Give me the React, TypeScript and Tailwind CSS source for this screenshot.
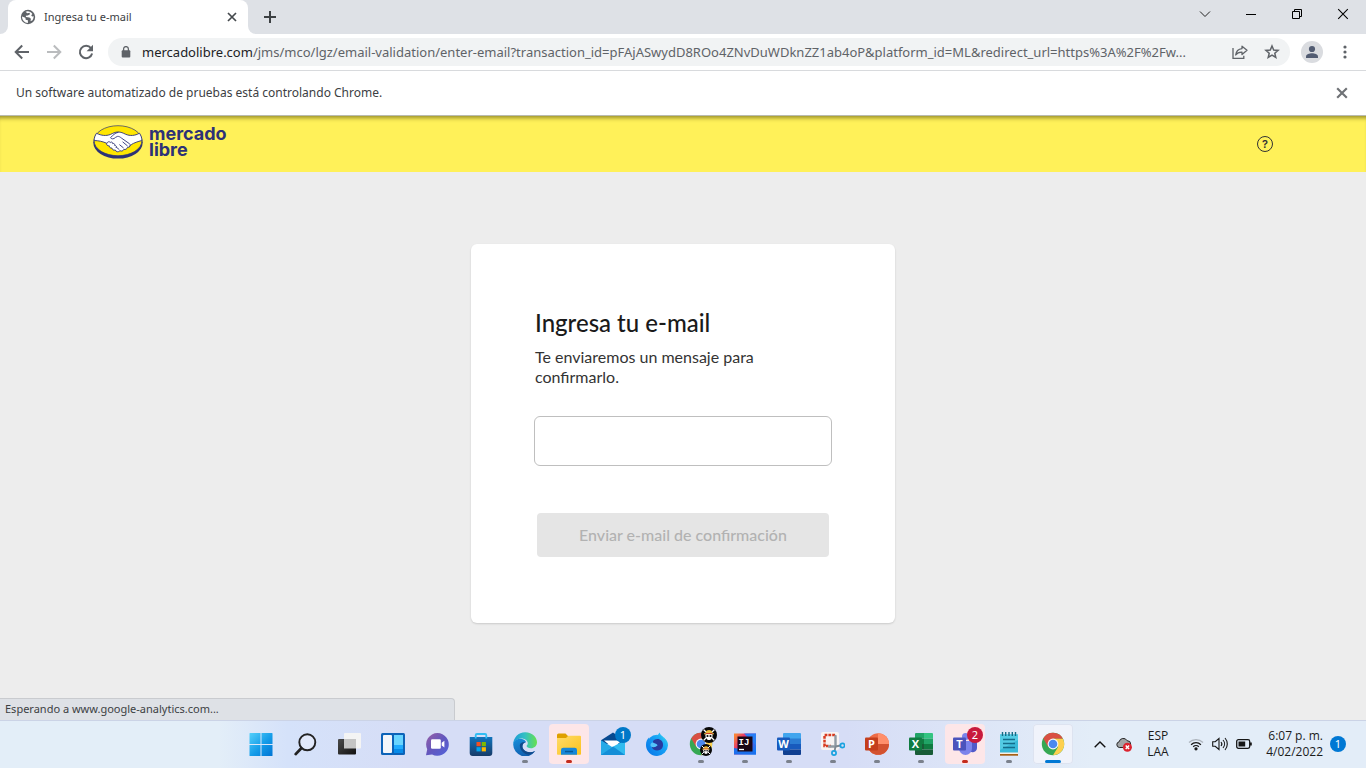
import type { ReactNode } from "react";

const ui = "font-['Noto_Sans','Open_Sans',sans-serif]";

/* ---------- Browser icons ---------- */

function Globe() {
  return (
    <svg className="size-4 shrink-0" viewBox="0 0 16 16" aria-hidden="true">
      <circle cx="8" cy="8" r="7.2" fill="#5f6368" />
      <path d="M2 7.5 5.4 8.8l.3 2 2.2.5v2.6C4.6 13.8 2 11.200 2 7.500ZM5.500 2.700l1.800 1.500 2.300-.4.400 1.500-2.200 1.200-2 .2.200 1.300 3.400.4 1.500 1.400-.4 2.400 2-.9.900-2 .3-2-1.600.2-.900-1.300 1.200-1.300C10.700 2.700 8 1.400 5.500 2.700Z" fill="#fff" />
    </svg>
  );
}

function Cross({ size, width, color }: { size: number; width: number; color: string }) {
  return (
    <svg width={size} height={size} viewBox="0 0 10 10" stroke={color} strokeWidth={width} aria-hidden="true">
      <path d="m1 1 8 8M9 1 1 9" />
    </svg>
  );
}

function ArrowLeft() {
  return (
    <svg className="size-4" viewBox="0 0 16 16" fill="none" stroke="#5f6368" strokeWidth="2" aria-hidden="true">
      <path d="M15 8H2.500M8.200 1.500 1.700 8l6.500 6.500" />
    </svg>
  );
}

function ArrowRight() {
  return (
    <svg className="size-4" viewBox="0 0 16 16" fill="none" stroke="#babcbe" strokeWidth="2" aria-hidden="true">
      <path d="M1 8h12.500M7.800 1.500 14.300 8l-6.500 6.500" />
    </svg>
  );
}

function Reload() {
  return (
    <svg className="size-4" viewBox="0 0 16 16" aria-hidden="true">
      <path d="M13 4.200A6.200 6.200 0 1 0 14.100 9.500" fill="none" stroke="#5f6368" strokeWidth="2" />
      <path d="M15 .8v6.400H8.600Z" fill="#5f6368" />
    </svg>
  );
}

function Lock() {
  return (
    <svg className="h-3 w-[10px] shrink-0" viewBox="0 0 10 12" aria-hidden="true">
      <path d="M2.600 5V3a2.400 2.400 0 0 1 4.800 0v2" fill="none" stroke="#5f6368" strokeWidth="1.300" />
      <rect x=".7" y="4.300" width="8.600" height="7.200" rx="1" fill="#5f6368" />
    </svg>
  );
}

function Share() {
  return (
    <svg className="size-4" viewBox="0 0 16 16" fill="none" stroke="#5f6368" strokeWidth="1.300" aria-hidden="true">
      <path d="M1 4v10.300h10.800v-2.500" />
      <path d="M10 2.200 15 6.300l-5 4.200V8.100C7 8 5.100 8.900 3.700 11c.4-3.500 2.600-6 6.300-6.400Z" strokeLinejoin="round" />
    </svg>
  );
}

function Star() {
  return (
    <svg className="size-4" viewBox="0 0 16 16" fill="none" stroke="#5f6368" strokeWidth="1.500" aria-hidden="true">
      <path d="m8 2 1.700 4 4.400.4-3.300 2.900 1 4.200L8 11.200l-3.800 2.300 1-4.200-3.300-2.900 4.400-.4Z" />
    </svg>
  );
}

function Avatar() {
  return (
    <svg className="size-[22px]" viewBox="0 0 22 22" aria-hidden="true">
      <circle cx="11" cy="11" r="11" fill="#dadce0" />
      <circle cx="11" cy="8" r="3.100" fill="#525c72" />
      <path d="M5 17v-1.500c0-2 3.500-3.200 6-3.200s6 1.200 6 3.200V17Z" fill="#525c72" />
    </svg>
  );
}

function Dots() {
  return (
    <svg className="h-4 w-1" viewBox="0 0 4 16" fill="#5f6368" aria-hidden="true">
      <circle cx="2" cy="3" r="1.600" />
      <circle cx="2" cy="8" r="1.600" />
      <circle cx="2" cy="13" r="1.600" />
    </svg>
  );
}

/* ---------- Site logo ---------- */

function Handshake() {
  return (
    <svg className="h-[34px] w-[50px]" viewBox="0 0 50 34" aria-hidden="true">
      <ellipse cx="25" cy="17.600" rx="24.700" ry="16" fill="#2d3277" />
      <ellipse cx="25" cy="15.700" rx="23.900" ry="15" fill="#ffe600" stroke="#2d3277" strokeWidth=".7" />
      <path
        d="M3.500 8.300c5 2.400 9.500 2.800 13.800 1.200C20 8.300 22 7 25 7c3 0 5 1 7.500 2.200 4.500 2 9.500 1.600 14-1 1.500 2.300 2.500 5 2.400 7.300-4 1-7.900 2.400-10.500 4-1.100 1-1.500 3.200-3.900 2.800-.7 2-2.200 2.500-3.600 2-.8 1.700-2.400 2.200-3.900 1.400-1.500 1.700-4.100 1.300-4.700-.7-1.800.6-3.300-.4-3.300-1.900-1.700.2-2.900-.8-2.600-2.200-2 .2-3.300-1.300-2.600-2.600C9.800 16.500 5.500 15.600 1.100 15.500c.1-2.700.9-5 2.400-7.200Z"
        fill="#fff" stroke="#2d3277" strokeWidth=".9"
      />
      <path
        d="M25.500 7.300c-3.800.4-5.700 3.500-8 5.300.7 1.700 3.300 1.700 5-.2l2-1c1.500-.2 2.600.6 4 1.700l8.200 5.800c1 .7.800 2-.8 2.700m-6.300-4.800 5 4.200m-8.200-1.400 4.200 3.400m-7.500-1 3.200 2.600M13.800 18.300c.7-1.500 2.500-2.300 3.400-.8 1.200-1.100 2.700-.2 2.500 1.100 1.400-.5 2.400.6 1.900 1.800 1.500-.1 2.200 1 1.400 2.300"
        fill="none" stroke="#2d3277" strokeWidth=".9"
      />
    </svg>
  );
}

/* ---------- Taskbar icons ---------- */

function Windows() {
  return (
    <svg className="size-6" viewBox="0 0 24 24" aria-hidden="true">
      <defs>
        <linearGradient id="win" x1="0" y1="0" x2="1" y2="1">
          <stop offset="0" stopColor="#54d0fa" />
          <stop offset=".55" stopColor="#139be8" />
          <stop offset="1" stopColor="#0074d4" />
        </linearGradient>
      </defs>
      <path d="M.5 1.500A.7.700 0 0 1 1 1h10.500v11H.5ZM12.500 1h10.500a.5.500 0 0 1 .5.500V12h-11ZM.5 13h11v11H1a.5.500 0 0 1-.5-.5ZM12.500 13h11v10.500a.5.500 0 0 1-.5.500H12.500Z" fill="url(#win)" />
    </svg>
  );
}

function Search() {
  return (
    <svg className="size-6" viewBox="0 0 24 24" fill="none" stroke="#222" aria-hidden="true">
      <circle cx="14.300" cy="10.300" r="8" strokeWidth="1.900" fill="#e2e9fa" />
      <path d="m8.300 16.200-5.600 5.900" strokeWidth="2.800" strokeLinecap="round" />
    </svg>
  );
}

function TaskView() {
  return (
    <svg className="size-6" viewBox="0 0 24 24" aria-hidden="true">
      <defs>
        <linearGradient id="tv" x1="0" y1="0" x2="1" y2="1">
          <stop offset="0" stopColor="#4a4a4a" /><stop offset="1" stopColor="#111" />
        </linearGradient>
      </defs>
      <rect x="7" y="1" width="17" height="15.500" rx="1" fill="#f4f4f4" />
      <rect x="1" y="7" width="18" height="15.500" rx="1" fill="url(#tv)" />
      <rect x="7" y="7" width="12" height="9.500" fill="#c4c4c4" />
    </svg>
  );
}

function Widgets() {
  return (
    <svg className="size-6" viewBox="0 0 24 24" aria-hidden="true">
      <rect y="1" width="24" height="22" rx="1.500" fill="#0c63b8" />
      <rect x="2" y="3" width="9" height="18" rx="1" fill="#f3f6fa" />
      <path d="M13 3h9v10h-9Z" fill="#69d5ff" />
      <path d="M13 13h9v4h-9Z" fill="#20acff" />
      <path d="M13 17h9v4h-9Z" fill="#078be9" />
    </svg>
  );
}

function Chat() {
  return (
    <svg className="size-6" viewBox="0 0 24 24" aria-hidden="true">
      <defs>
        <linearGradient id="chat" x1="0" y1="0" x2="1" y2="1">
          <stop offset="0" stopColor="#9a5fa5" /><stop offset=".5" stopColor="#6257be" /><stop offset="1" stopColor="#5164dc" />
        </linearGradient>
      </defs>
      <path d="M12.500 1a11.400 11.400 0 1 1-5.400 21.500L1 23.200l1.200-6A11.400 11.400 0 0 1 12.500 1Z" fill="url(#chat)" />
      <rect x="6" y="7.200" width="9.800" height="9.500" rx="1.200" fill="#fff" />
      <path d="m16.700 10.700 2.700-2v6.700l-2.700-2Z" fill="#fff" />
    </svg>
  );
}

function Store() {
  return (
    <svg className="size-6" viewBox="0 0 24 24" aria-hidden="true">
      <defs>
        <linearGradient id="store" x1="0" y1="0" x2="0" y2="1">
          <stop offset="0" stopColor="#1174bd" /><stop offset="1" stopColor="#173b68" />
        </linearGradient>
      </defs>
      <path d="M.7 5h22.600v16a3 3 0 0 1-3 3H3.700a3 3 0 0 1-3-3Z" fill="url(#store)" />
      <path d="M6.700 6.500V3.300c0-.8.500-1.300 1.300-1.300h8c.8 0 1.300.5 1.300 1.300v3.200" fill="none" stroke="#31bdf3" strokeWidth="1.800" />
      <path d="M7.500 10h4.200v4.200H7.500Z" fill="#f25022" /><path d="M12.700 10h4.200v4.200h-4.200Z" fill="#7fba00" />
      <path d="M7.500 15.200h4.200v4.200H7.500Z" fill="#00a4ef" /><path d="M12.700 15.200h4.200v4.200h-4.200Z" fill="#ffb900" />
    </svg>
  );
}

function Edge() {
  return (
    <svg className="size-6" viewBox="0 0 24 24" aria-hidden="true">
      <defs>
        <linearGradient id="edgeTop" x1="0" y1=".3" x2="1" y2=".3">
          <stop offset="0" stopColor="#1d9bd8" /><stop offset=".5" stopColor="#34c1c2" /><stop offset="1" stopColor="#66e14c" />
        </linearGradient>
        <linearGradient id="edgeLow" x1="0" y1="0" x2=".4" y2="1">
          <stop offset="0" stopColor="#168fdb" /><stop offset="1" stopColor="#1160b0" />
        </linearGradient>
      </defs>
      <path d="M.2 12.500C.2 5.600 5.300.2 12.200.2 19.600.2 24 5.700 24 10.200c0 3.800-2.900 6-6 6-2.800 0-4.400-1-4.400-2.100 0-.8 1.200-1 1.200-3 0-2.500-2.900-4.700-6.300-4.700C4.600 6.400 1.300 8.500.2 12.500Z" fill="url(#edgeTop)" />
      <path d="M.2 12.500c.5-3.800 4-6 7.600-5.700 2.800.2 5 1.900 5.200 3.400-2.200.2-3.600 2.100-3.600 4 0 3.500 4 6.500 8.200 6.100 1.600-.1 3.400-.7 4.600-1.300A12 12 0 0 1 .2 12.500Z" fill="url(#edgeLow)" />
      <path d="M6.800 13.200c0 4.500 3.800 9.100 9.300 9.500 2.500-.5 4.700-2 6.100-3.700-6 3-12.200.2-12.800-4.200-.1-1.900.8-3.700 3-4.800-3.500-.2-5.600 1.200-5.600 3.200Z" fill="#114a8b" />
    </svg>
  );
}

function Folder() {
  return (
    <svg className="size-6" viewBox="0 0 24 24" aria-hidden="true">
      <defs>
        <linearGradient id="folder" x1="0" y1="0" x2="1" y2="1">
          <stop offset="0" stopColor="#ffdb6a" /><stop offset="1" stopColor="#fbc21c" />
        </linearGradient>
      </defs>
      <path d="M0 3a1.500 1.500 0 0 1 1.500-1.500h7L11 4v3H0Z" fill="#dfa000" />
      <path d="M0 6h9l2.300-2.300H23a1 1 0 0 1 1 1V22a.8.800 0 0 1-.8.800H.8A.8.800 0 0 1 0 22Z" fill="url(#folder)" />
      <path d="M4 22.800V18a2.300 2.300 0 0 1 2.300-2.300h11.400A2.300 2.300 0 0 1 20 18v4.800Z" fill="#1787d8" />
      <path d="M8 18.800h8v1.500H8Z" fill="#075997" />
    </svg>
  );
}

function Mail() {
  return (
    <svg className="size-6" viewBox="0 0 24 24" aria-hidden="true">
      <path d="M0 8.300 12 .5l12 7.800V12H0Z" fill="#084a91" />
      <path d="M3 8.500h18L12 16Z" fill="#fff" />
      <path d="M0 8.300 24 23H0Z" fill="#25a9e7" /><path d="M24 8.300V23L7.500 17Z" fill="#31bbef" /><path d="m0 23 12-8.500L24 23Z" fill="#148ed7" />
    </svg>
  );
}

function Firefox() {
  return (
    <svg className="size-6" viewBox="0 0 24 24" aria-hidden="true">
      <defs>
        <linearGradient id="fox" x1="0" y1=".8" x2="1" y2="0">
          <stop offset="0" stopColor="#0878e8" /><stop offset=".6" stopColor="#17a4f6" /><stop offset="1" stopColor="#43e4ed" />
        </linearGradient>
      </defs>
      <circle cx="12" cy="13" r="10.300" fill="url(#fox)" />
      <path d="M1 13C1 9.300 2.300 7.300 3.700 5.400l.4 2.100 2.600-1.800c.4 1 1.100 1.700 2.200 2L12 8c-.5-3 1-5.500 2.700-7.500.4 2.400 2 3 3.300 4.600 0 1 .4 1.700 1 2.200l.4-1.200c2.300 2.200 3.600 4.200 3.600 7.200A11.100 11.100 0 0 1 12 24 11 11 0 0 1 1 13Z" fill="url(#fox)" />
      <path d="M8 9c1.700-2.400 6-3 8.300-.5 2.600 2.700 2.300 7.300-1 9.300-3.500 1.900-8 .3-8.500-3.300 2.200 1 4 .2 5.300-1.100-1.900-.5-4.200-1-4.100-4.400Z" fill="#273aa0" />
      <path d="M5.700 14.300c1.500 1 3.400 1.200 5.300.2l1.700-1.200c-1.700-2-3.300-1.800-4.900-2.700C6 10.800 5 12.200 5.700 14.300Z" fill="#54c3fb" />
    </svg>
  );
}

function ChromeBall({ className }: { className: string }) {
  return (
    <svg className={className} viewBox="0 0 24 24" aria-hidden="true">
      <circle cx="12" cy="12" r="11.200" fill="#35a853" />
      <path d="M12 12 2.300 6.400A11.200 11.200 0 0 1 21.900 6.700H12Z" fill="#d94f43" />
      <path d="M12 6.700h9.900A11.200 11.200 0 0 1 12 23.200l5-8.200Z" fill="#fdd04f" />
      <path d="M2.300 6.400 7.200 15 12 6.700Z" fill="#d94f43" />
      <circle cx="12" cy="12" r="5.400" fill="#f5f7fb" /><circle cx="12" cy="12" r="4.300" fill="#4b89ef" />
    </svg>
  );
}

function Pirate({ className }: { className: string }) {
  return (
    <svg className={className} viewBox="0 0 16 16" aria-hidden="true">
      <circle cx="8" cy="8" r="8" fill="#080808" />
      <path d="m3 3 10 10m0-10-10 10" stroke="#fff" strokeWidth="1.300" strokeLinecap="round" />
      <circle cx="8" cy="8.400" r="3.600" fill="#fff" />
      <path d="M6.300 11h3.400v2H6.300Z" fill="#fff" />
      <path d="M3 7.200h10v-1H11.300a3.300 3.300 0 0 0-6.600 0H3Z" fill="#edbd3b" />
      <path d="M4.700 6h6.600v1H4.700Z" fill="#c63d2d" />
      <circle cx="6.500" cy="9" r="1.100" fill="#080808" /><circle cx="9.500" cy="9" r="1.100" fill="#080808" />
    </svg>
  );
}

function ChromeTesting() {
  return (
    <span className="relative block size-6">
      <ChromeBall className="size-6" />
      <Pirate className="absolute -top-[5px] left-3 size-4" />
      <Pirate className="absolute top-3 left-[11px] size-3" />
    </span>
  );
}

function IntelliJ() {
  return (
    <svg className="size-6" viewBox="0 0 24 24" aria-hidden="true">
      <defs>
        <linearGradient id="ij" x1="0" y1=".2" x2="1" y2=".8">
          <stop offset="0" stopColor="#f98538" /><stop offset=".3" stopColor="#e8366e" /><stop offset=".6" stopColor="#7257dc" /><stop offset="1" stopColor="#087cfa" />
        </linearGradient>
      </defs>
      <path d="M1 1.500h22v21H1Z" fill="url(#ij)" />
      <path d="M11 1.500h12v12Z" fill="#287ef5" /><path d="M1 16v6.500h22V20Z" fill="#1c70ec" />
      <path d="M4.500 4.500h15v15h-15Z" fill="#1a0716" />
      <path d="M6 17.500h5" stroke="#fff" strokeWidth="1.300" />
      <text x="5.500" y="12.500" fontFamily="Liberation Mono, monospace" fontSize="9" fontWeight="700" fill="#fff">IJ</text>
    </svg>
  );
}

function OfficeLetter({ children, fill }: { children: string; fill: string }) {
  return (
    <>
      <rect y="5.500" width="13" height="13" rx="1" fill={fill} />
      <text x="6.500" y="16" textAnchor="middle" fontFamily="Open Sans, sans-serif" fontSize="11" fontWeight="700" fill="#fff">{children}</text>
    </>
  );
}

function Word() {
  return (
    <svg className="size-6" viewBox="0 0 24 24" aria-hidden="true">
      <path d="M6 2a1 1 0 0 1 1-1h16a1 1 0 0 1 1 1v5H6Z" fill="#41a5ee" /><path d="M6 6.500h18V12H6Z" fill="#2b7cd3" />
      <path d="M6 12h18v5.500H6Z" fill="#185abd" /><path d="M6 17.500h18V22a1 1 0 0 1-1 1H7a1 1 0 0 1-1-1Z" fill="#103f91" />
      <OfficeLetter fill="#185abd">W</OfficeLetter>
    </svg>
  );
}

function Snip() {
  return (
    <svg className="size-6" viewBox="0 0 24 24" aria-hidden="true">
      <rect x="0" y="0" width="18" height="18" rx="2" fill="#f8f4f3" />
      <path d="M14 3H3.500v11H10" fill="none" stroke="#d83b20" strokeWidth="2.500" strokeDasharray="2.800 1" />
      <path d="M14.500 4v10.500M14.500 14.500H8" stroke="#909aa3" strokeWidth="2.400" strokeLinecap="round" />
      <path d="m14.500 14.500-1 5M14.500 14.500l5-1" stroke="#7d8790" strokeWidth="1.800" />
      <circle cx="13" cy="21" r="2.100" fill="none" stroke="#18a2df" strokeWidth="1.700" /><circle cx="21.500" cy="13.500" r="2.100" fill="none" stroke="#18a2df" strokeWidth="1.700" />
    </svg>
  );
}

function PowerPoint() {
  return (
    <svg className="size-6" viewBox="0 0 24 24" aria-hidden="true">
      <circle cx="13.200" cy="12" r="10.800" fill="#ed6c47" /><path d="M13 1.200A10.800 10.800 0 0 1 24 12H13Z" fill="#ff8f6b" /><path d="M2.400 12H24a10.800 10.800 0 0 1-21.600 0Z" fill="#d35230" />
      <OfficeLetter fill="#c43e1c">P</OfficeLetter>
    </svg>
  );
}

function Excel() {
  return (
    <svg className="size-6" viewBox="0 0 24 24" aria-hidden="true">
      <path d="M6 2a1 1 0 0 1 1-1h8v5.500H6Z" fill="#21a366" /><path d="M15 1h8a1 1 0 0 1 1 1v4.500h-9Z" fill="#33c481" />
      <path d="M6 6.500h9V12H6Z" fill="#107c41" /><path d="M15 6.500h9V12h-9Z" fill="#21a366" />
      <path d="M6 12h9v5.500H6Z" fill="#185c37" /><path d="M15 12h9v5.500h-9Z" fill="#107c41" />
      <path d="M6 17.500h18V22a1 1 0 0 1-1 1H7a1 1 0 0 1-1-1Z" fill="#185c37" />
      <OfficeLetter fill="#107c41">X</OfficeLetter>
    </svg>
  );
}

function Teams() {
  return (
    <svg className="size-6" viewBox="0 0 24 24" aria-hidden="true">
      <circle cx="12.500" cy="4.500" r="3.500" fill="#7b83eb" /><path d="M16 9h7a1 1 0 0 1 1 1v6a4.500 4.500 0 0 1-8 2.500Z" fill="#5059c9" />
      <path d="M7 9h11a1 1 0 0 1 1 1v6.500a6.500 6.500 0 0 1-13 0V10a1 1 0 0 1 1-1Z" fill="#7b83eb" />
      <OfficeLetter fill="#4b53bc">T</OfficeLetter>
    </svg>
  );
}

function Notepad() {
  return (
    <svg className="size-6" viewBox="0 0 24 24" aria-hidden="true">
      <path d="M3 2.500h18V21H3Z" fill="#39b9d8" /><path d="M3 2.500h18V8L3 18Z" fill="#53cbe4" />
      <path d="M3 20.500h18v2H3Z" fill="#f5f0e8" /><path d="M3 22h18v1.700H3Z" fill="#a76015" />
      <path d="M5.500 0v4m3.200-4v4M12 0v4m3.300-4v4m3.200-4v4" stroke="#176b85" strokeWidth="1.400" />
      <path d="M6 7.500h12M6 11.500h12M6 15.500h12" stroke="#156d8b" strokeWidth="1.700" />
    </svg>
  );
}

/* ---------- Taskbar ---------- */

type AppItem = {
  name: string;
  icon: ReactNode;
  state?: "running" | "alert" | "active";
  badge?: { text: string; className: string };
};

const apps: AppItem[] = [
  { name: "Inicio", icon: <Windows /> },
  { name: "Buscar", icon: <Search /> },
  { name: "Vista de tareas", icon: <TaskView /> },
  { name: "Widgets", icon: <Widgets /> },
  { name: "Chat", icon: <Chat /> },
  { name: "Microsoft Store", icon: <Store /> },
  { name: "Microsoft Edge", icon: <Edge />, state: "running" },
  { name: "Explorador de archivos", icon: <Folder />, state: "alert" },
  { name: "Correo", icon: <Mail />, badge: { text: "1", className: "bg-[#0078c8]" } },
  { name: "Firefox", icon: <Firefox /> },
  { name: "Chrome de pruebas", icon: <ChromeTesting />, state: "running" },
  { name: "IntelliJ IDEA", icon: <IntelliJ />, state: "running" },
  { name: "Word", icon: <Word />, state: "running" },
  { name: "Recortes", icon: <Snip />, state: "running" },
  { name: "PowerPoint", icon: <PowerPoint />, state: "running" },
  { name: "Excel", icon: <Excel />, state: "running" },
  { name: "Teams", icon: <Teams />, state: "alert", badge: { text: "2", className: "bg-[#c8193c]" } },
  { name: "Bloc de notas", icon: <Notepad />, state: "running" },
  { name: "Google Chrome", icon: <ChromeBall className="size-6" />, state: "active" },
];

const tiles = { running: "", alert: "bg-[#fde6e8]", active: "bg-[#f0f3fb] ring-1 ring-[#dde3f0] ring-inset" };
const marks = { running: "w-[6px] bg-[#7b818c]", alert: "w-[6px] bg-[#c42b1c]", active: "w-4 bg-[#0078d4]" };

function TaskButton({ app }: { app: AppItem }) {
  return (
    <button
      type="button"
      aria-label={app.name}
      className={`relative flex size-10 items-center justify-center rounded ${app.state ? tiles[app.state] : ""}`}
    >
      {app.icon}
      {app.badge && (
        <span className={`absolute top-[3px] right-[2px] flex size-4 items-center justify-center rounded-full text-[11px] leading-4 text-white ${app.badge.className}`}>
          {app.badge.text}
        </span>
      )}
      {app.state && <span className={`absolute bottom-px h-[3px] rounded-full ${marks[app.state]}`} />}
    </button>
  );
}

function Tray() {
  return (
    <div className="flex items-center text-[12px] leading-4 text-[#1b1b1b]">
      <button type="button" aria-label="Mostrar iconos ocultos" className="flex h-10 w-6 items-center justify-center">
        <svg className="h-[7px] w-3" viewBox="0 0 12 7" fill="none" stroke="#111" strokeWidth="1.400" aria-hidden="true"><path d="M.7 6.300 6 1l5.300 5.300" /></svg>
      </button>
      <button type="button" aria-label="OneDrive" className="flex h-10 w-6 items-center justify-center">
        <svg className="size-4" viewBox="0 0 16 16" aria-hidden="true">
          <path d="M3.300 11.500a2.900 2.900 0 0 1-.2-5.700 4.300 4.300 0 0 1 8-1.100 3.500 3.500 0 0 1 3.600 3.500L14 11.500Z" fill="#a2a4a6" stroke="#222" />
          <circle cx="11.400" cy="11.200" r="4.500" fill="#dc2430" /><path d="m9.700 9.500 3.400 3.400m0-3.400-3.400 3.400" stroke="#fff" strokeWidth="1.400" />
        </svg>
      </button>
      <button type="button" className="h-10 w-11 text-center font-['Open_Sans',sans-serif]">ESP<br />LAA</button>
      <button type="button" aria-label="Red, volumen y batería" className="ml-2 flex h-10 items-center gap-2">
        <svg className="size-4" viewBox="0 0 16 16" fill="none" stroke="#161616" strokeWidth="1.300" aria-hidden="true">
          <path d="M1 6.500a10 10 0 0 1 14 0" stroke="#adb4bd" /><path d="M3.100 8.700a7 7 0 0 1 9.800 0M5.200 10.800a4 4 0 0 1 5.600 0" /><circle cx="8" cy="12.800" r="1" fill="#161616" />
        </svg>
        <svg className="size-4" viewBox="0 0 16 16" fill="none" stroke="#161616" strokeWidth="1.100" aria-hidden="true">
          <path d="M.7 5.700h2.500L7 2.500v11l-3.800-3.200H.7ZM9 6a3 3 0 0 1 0 4m2-6a6 6 0 0 1 0 8m2-10a9 9 0 0 1 0 12" />
        </svg>
        <svg className="size-4" viewBox="0 0 16 16" aria-hidden="true">
          <rect x=".7" y="3.700" width="13" height="8.600" rx="1.700" fill="none" stroke="#161616" strokeWidth="1.300" /><path d="M2.500 5.500h6.700v5H2.500ZM14 6.500h1.800v3H14Z" fill="#161616" />
        </svg>
      </button>
      <button type="button" className="ml-2 h-10 w-[63px] text-right font-['Open_Sans',sans-serif] whitespace-nowrap">6:07 p. m.<br />4/02/2022</button>
      <button type="button" aria-label="1 notificación" className="ml-[7px] flex size-4 items-center justify-center rounded-full bg-[#0078d4] text-[11px] text-white">1</button>
    </div>
  );
}

/* ---------- Browser window ---------- */

function TabStrip() {
  return (
    <div className="flex h-[34px] justify-between bg-[#dee1e6]">
      <div className="flex">
        <div className="w-2 bg-white"><div className="h-full rounded-br-lg bg-[#dee1e6]" /></div>
        <div role="tab" aria-selected="true" className="flex w-60 items-center rounded-t-lg bg-white pr-[11px] pl-3 text-[11px] text-[#3c4043]">
          <Globe />
          <span className="ml-2 flex-1">Ingresa tu e-mail</span>
          <button type="button" aria-label="Cerrar pestaña"><Cross size={10} width={1.7} color="#45494d" /></button>
        </div>
        <div className="w-2 bg-white"><div className="h-full rounded-bl-lg bg-[#dee1e6]" /></div>
        <button type="button" aria-label="Nueva pestaña" className="flex w-7 items-center justify-center">
          <svg className="size-3" viewBox="0 0 12 12" stroke="#3c4043" strokeWidth="2" aria-hidden="true"><path d="M6 0v12M0 6h12" /></svg>
        </button>
      </div>
      <div className="flex h-7">
        <button type="button" aria-label="Buscar pestañas" className="flex w-[46px] items-center justify-center">
          <svg className="h-3 w-3" viewBox="0 0 12 12" fill="none" stroke="#222" aria-hidden="true"><path d="m1 3.500 5 5 5-5" /></svg>
        </button>
        <button type="button" aria-label="Minimizar" className="flex w-[46px] items-center justify-center"><span className="h-px w-[10px] bg-black" /></button>
        <button type="button" aria-label="Restaurar" className="flex w-[46px] items-center justify-center">
          <svg className="size-[10px]" viewBox="0 0 10 10" fill="none" stroke="#000" aria-hidden="true"><path d="M.5 2.500h7v7h-7ZM2.500 2.500v-2h7v7h-2" /></svg>
        </button>
        <button type="button" aria-label="Cerrar" className="flex w-[46px] items-center justify-center"><Cross size={12} width={0.9} color="#000" /></button>
      </div>
    </div>
  );
}

function Toolbar() {
  return (
    <div className="flex h-[37px] items-center border-b border-[#d8dadd] bg-white pr-[10px]">
      <div className="flex gap-4 px-[14px]">
        <button type="button" aria-label="Atrás"><ArrowLeft /></button>
        <button type="button" aria-label="Adelante"><ArrowRight /></button>
        <button type="button" aria-label="Volver a cargar"><Reload /></button>
      </div>
      <div className="flex h-7 min-w-0 flex-1 items-center rounded-full bg-[#f1f3f4] pr-[10px] pl-[13px]">
        <Lock />
        <div role="textbox" aria-label="Barra de direcciones" tabIndex={0} className="ml-[11px] min-w-0 flex-1 truncate text-[13px] leading-5 text-[#5f6368]">
          <span className="text-[#202124]">mercadolibre.com</span>
          /jms/mco/lgz/email-validation/enter-email?transaction_id=pFAjASwydD8ROo4ZNvDuWDknZZ1ab4oP&amp;platform_id=ML&amp;redirect_url=https%3A%2F%2Fw...
        </div>
        <div className="ml-3 flex gap-4">
          <button type="button" aria-label="Compartir"><Share /></button>
          <button type="button" aria-label="Agregar a favoritos"><Star /></button>
        </div>
      </div>
      <button type="button" aria-label="Perfil" className="ml-[11px]"><Avatar /></button>
      <button type="button" aria-label="Menú" className="ml-[11px] flex w-[22px] justify-center"><Dots /></button>
    </div>
  );
}

export default function App() {
  return (
    <div className={`flex min-h-screen flex-col bg-[#ededed] ${ui}`}>
      <TabStrip />
      <Toolbar />
      <div className="flex h-[45px] items-center justify-between border-b border-[#b9bbb0] bg-white pr-[18px] pl-4 text-[12px] text-[#3c4043]">
        <p>Un software automatizado de pruebas está controlando Chrome.</p>
        <button type="button" aria-label="Cerrar aviso"><Cross size={12} width={1.8} color="#6f7276" /></button>
      </div>

      <div className="relative flex flex-1 flex-col font-[Lato,'Open_Sans',sans-serif]">
        <header className="h-14 bg-[#fff159] shadow-[inset_0_5px_4px_-3px_rgba(80,75,10,0.6)]">
          <div className="mx-auto flex h-full w-full max-w-[1180px] items-center justify-between">
            <a href="#inicio" aria-label="Mercado Libre" className="flex items-center gap-[6px] pb-1 font-['Inter','Liberation_Sans',sans-serif] text-[18px] leading-4 font-bold text-[#2d3277]">
              <Handshake />
              <span className="flex flex-col">
                <span>mercado</span>
                <span>libre</span>
              </span>
            </a>
            <a href="#ayuda" aria-label="Ayuda" className="flex size-4 items-center justify-center rounded-full border border-[#333] font-['Inter',sans-serif] text-[11px] leading-none font-semibold text-[#333]">?</a>
          </div>
        </header>

        <main className="flex-1 px-4 py-[72px]">
          <form className="mx-auto flex w-full max-w-[424px] flex-col rounded-md bg-white px-[63px] pt-16 pb-[66px] shadow-[0_1px_2px_rgba(0,0,0,0.15)]" onSubmit={(e) => e.preventDefault()}>
            <h1 className="px-px text-[24px] leading-[30px] font-medium text-[#1a1a1a]">Ingresa tu e-mail</h1>
            <label htmlFor="email" className="mt-[9px] max-w-60 px-px text-[16px] leading-5 text-[#333]">
              Te enviaremos un mensaje para confirmarlo.
            </label>
            <input id="email" type="email" className="mt-[29px] h-[50px] rounded-md border border-[#bfbfbf] px-3 text-[16px] outline-none" />
            <button type="submit" disabled className="mx-[3px] mt-[47px] h-11 rounded-[4px] bg-[#e5e5e5] text-[16px] font-medium text-[#b2b2b2]">
              Enviar e-mail de confirmación
            </button>
          </form>
        </main>

        <div className={`absolute bottom-0 left-0 flex h-[22px] w-1/3 items-center rounded-tr border-t border-r border-[#c9cbcf] bg-[#dee1e6] pl-[5px] text-[11px] text-[#3c4043] ${ui}`}>
          Esperando a www.google-analytics.com...
        </div>
      </div>

      <footer className="flex h-12 items-center justify-end gap-[15px] bg-[linear-gradient(90deg,#e3eef8_16%,#d5e2fa_21%,#d6ddf6_30%,#d6ddf6_62%,#e3edf8_80%)] pr-5 shadow-[inset_0_1px_0_#cbd3e6]">
        <nav aria-label="Aplicaciones" className="flex gap-1">
          {apps.map((app) => <TaskButton key={app.name} app={app} />)}
        </nav>
        <Tray />
      </footer>
    </div>
  );
}
